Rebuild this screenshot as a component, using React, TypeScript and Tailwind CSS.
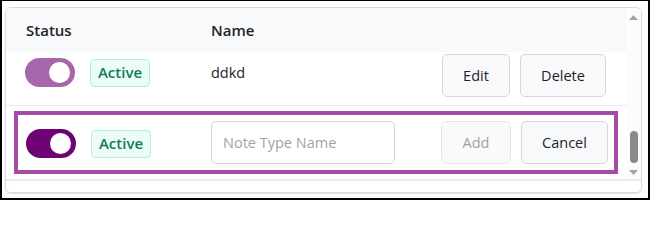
import React from "react";

function Toggle({ dim }: { dim?: boolean }) {
  return (
    <div
      className={`flex h-[29px] w-[50px] shrink-0 items-center justify-end rounded-full pr-[5px] ${
        dim ? "bg-[#a866ad]" : "bg-[#6f0373]"
      }`}
    >
      <div className="h-[21px] w-[21px] rounded-full bg-white" />
    </div>
  );
}

function Badge() {
  return (
    <div className="flex h-[28px] w-[60px] shrink-0 items-center justify-center rounded-[4px] border border-[#b5f0d6] bg-[#ecfdf5] text-[15px] font-semibold text-[#0f7a5c]">
      Active
    </div>
  );
}

function Btn({ children, w, disabled }: { children: React.ReactNode; w: string; disabled?: boolean }) {
  return (
    <div
      className={`flex h-[43px] items-center justify-center rounded-[5px] border text-[14.5px] ${w} ${
        disabled
          ? "border-[#e6e6e6] bg-[#fafafa] text-[#a3a3a3]"
          : "border-[#d4d7db] bg-[#f8f9fa] text-[#1f2328]"
      }`}
    >
      {children}
    </div>
  );
}

export default function App() {
  return (
    <div
      className="h-[200px] w-[650px] border-b-[2px] border-l-[2px] border-r-[2px] border-t border-black bg-white pl-[3px] pt-[6px] text-[#1f2328]"
      style={{ fontFamily: '"Open Sans", "Noto Sans", sans-serif' }}
    >
      <div className="flex h-[186px] w-[637px] flex-col overflow-hidden rounded-[6px] border border-[#dadada] shadow-[0_1px_1px_rgba(0,0,0,0.12)]">
        <div className="flex h-[171px] shrink-0">
          <div className="flex flex-1 flex-col">
            {/* header */}
            <div className="flex h-[44px] shrink-0 items-center bg-[#f8f9fa] pl-[20px] text-[15px] font-semibold">
              <div className="w-[185px]">Status</div>
              <div>Name</div>
            </div>
            {/* row 1 */}
            <div className="flex h-[54px] shrink-0 items-start border-b border-[#e5e7eb] pl-[19px] pr-[20px]">
              <div className="flex w-[186px] items-center gap-[15px] pt-[6px]">
                <Toggle dim />
                <Badge />
              </div>
              <div className="flex-1 pt-[10px] text-[14.5px]">ddkd</div>
              <div className="flex gap-[10px] pt-[2px]">
                <Btn w="w-[68px]">Edit</Btn>
                <Btn w="w-[86px]">Delete</Btn>
              </div>
            </div>
            {/* row 2 (editing) */}
            <div className="mx-[8px] mt-[5px] flex h-[63px] items-center border-[4px] border-[#a44ca3] pl-[8px] pr-[6px]">
              <div className="flex w-[185px] items-center gap-[15px] pt-[2px]">
                <Toggle />
                <Badge />
              </div>
              <div className="flex-1">
                <div className="flex h-[43px] w-[184px] items-center rounded-[5px] border border-[#d1d5db] bg-white pl-[11px] text-[14.5px] text-[#9ca3af]">
                  Note Type Name
                </div>
              </div>
              <div className="flex gap-[10px]">
                <Btn w="w-[70px]" disabled>
                  Add
                </Btn>
                <Btn w="w-[87px]">Cancel</Btn>
              </div>
            </div>
          </div>
          {/* scrollbar */}
          <div className="flex w-[15px] shrink-0 flex-col items-center bg-[#fcfcfc] pt-[7px]">
            <svg width="9" height="5" viewBox="0 0 9 5">
              <path d="M0 5 L4.5 0 L9 5 Z" fill="#a3a3a3" />
            </svg>
            <div className="mt-[111px] h-[32px] w-[8px] rounded-full bg-[#8a8a8a]" />
            <div className="mt-[7px]">
              <svg width="9" height="5" viewBox="0 0 9 5">
                <path d="M0 0 L4.5 5 L9 0 Z" fill="#a3a3a3" />
              </svg>
            </div>
          </div>
        </div>
        <div className="h-[2px] shrink-0 bg-[#e8eaec]" />
        <div className="flex-1 bg-white" />
      </div>
    </div>
  );
}
